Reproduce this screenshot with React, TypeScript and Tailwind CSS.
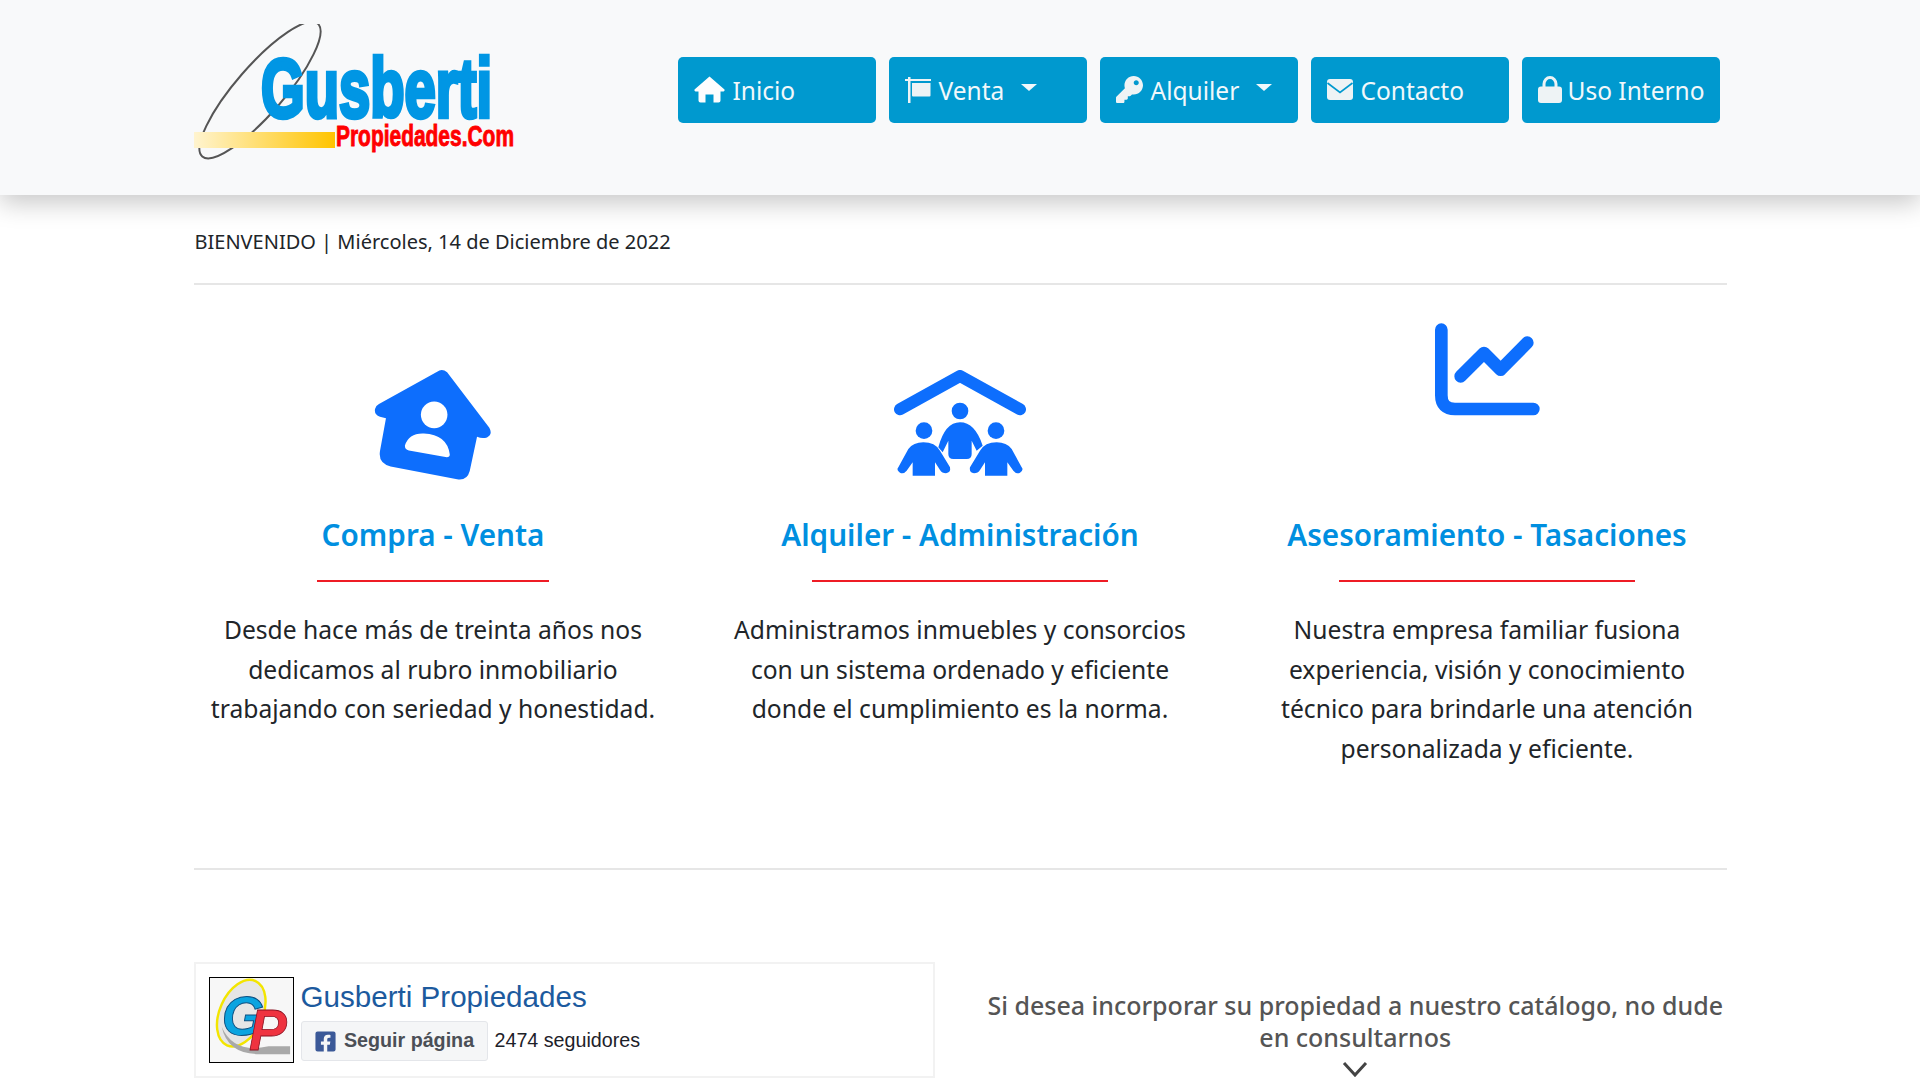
import { FaKey, FaFacebookSquare } from "react-icons/fa";
import type { ReactNode } from "react";

function Logo() {
  return (
    <svg width="330" height="150" viewBox="0 0 330 150" className="shrink-0">
      <defs>
        <linearGradient id="bar" x1="0" x2="1" y1="0" y2="0">
          <stop offset="0" stopColor="#fff4cf" />
          <stop offset="1" stopColor="#ffc400" />
        </linearGradient>
      </defs>
      <ellipse cx="66" cy="66" rx="88" ry="24" transform="rotate(-49 66 66)" fill="none" stroke="#555" strokeWidth="2" />
      <rect x="0" y="108" width="141" height="16" fill="url(#bar)" />
      <text x="67" y="93" textLength="231" lengthAdjust="spacingAndGlyphs" fontFamily="Liberation Sans, sans-serif" fontWeight="700" fontSize="84" fill="#0096e4" stroke="#0096e4" strokeWidth="4.5">Gusberti</text>
      <text x="142" y="122" textLength="178" lengthAdjust="spacingAndGlyphs" fontFamily="Liberation Sans, sans-serif" fontWeight="700" fontSize="29" fill="#ff0000" stroke="#ff0000" strokeWidth="0.9">Propiedades.Com</text>
    </svg>
  );
}

function HomeGlyph() {
  return (
    <svg width="31" height="27" viewBox="0 0 31 27" fill="#fdfdfe">
      <path d="M15.5 0.5 L30.5 13.5 Q31 15.5 28.5 15.5 H26.5 V24.5 a2 2 0 0 1-2 2 H19.5 V18.5 H11.5 V26.5 H6.5 a2 2 0 0 1-2-2 V15.5 H2.5 Q0 15.5 0.5 13.5 Z" />
    </svg>
  );
}

function SignGlyph() {
  return (
    <svg width="26" height="26" viewBox="0 0 26 26" fill="#eef3f5">
      <rect x="3" y="0" width="2.5" height="26" />
      <rect x="0" y="2" width="26" height="2" />
      <path d="M7 6h18.5v12.5a1 1 0 0 1-1 1H8a1 1 0 0 1-1-1z" />
    </svg>
  );
}

function MailGlyph() {
  return (
    <svg width="26" height="21" viewBox="0 0 26 21">
      <rect width="26" height="21" rx="3" fill="#eef3f5" />
      <path d="M0.5 4 L13 13.5 L25.5 4" fill="none" stroke="#0099cf" strokeWidth="1.6" />
    </svg>
  );
}

function LockGlyph() {
  return (
    <svg width="24" height="27" viewBox="0 0 24 27" className="-mr-[2px]">
      <path d="M6 13 V8 a6 6.5 0 0 1 12 0 V13" fill="none" stroke="#eef3f5" strokeWidth="3" />
      <rect y="10.5" width="24" height="16.5" rx="3" fill="#eef3f5" />
    </svg>
  );
}

function NavButton({ icon, label, caret }: { icon: ReactNode; label: string; caret?: boolean }) {
  return (
    <a className="flex h-[66px] w-[198px] items-center gap-[8px] rounded-[5px] bg-[#0099cf] pl-[16px] text-[24.5px] text-[#f1f8fb]">
      {icon}
      <span className="pt-[3px]">{label}</span>
      {caret && <span className="mb-[4px] ml-[9px] border-x-[8px] border-t-[7px] border-x-transparent border-t-[#f1f8fb]" />}
    </a>
  );
}

function HouseIcon() {
  return (
    <svg width="118" height="113" viewBox="100 85 355 340">
      <path fill="#0d6efd" d="M290 96 Q305 85 320 98 L447 265 Q458 285 440 294 Q425 298 410 292 L388 395 Q380 425 350 420 L150 381 Q112 372 118 335 L136 236 L118 232 Q100 225 103 208 Q105 198 115 193 Z" />
      <circle cx="281" cy="226" r="40" fill="#fff" />
      <path fill="#fff" d="M193 318 Q205 280 250 282 Q320 285 328 345 Q328 355 315 353 L205 333 Q192 330 193 318Z" />
    </svg>
  );
}

function FamilyIcon() {
  const side = "M85 350 L115 295 Q130 275 160 275 Q195 275 210 300 L240 350 Q243 366 228 368 Q216 368 210 358 L195 335 L195 375 L128 375 L128 335 L110 360 Q100 372 90 366 Q78 358 85 350Z";
  return (
    <svg width="132" height="106" viewBox="72 58 396 318" className="mb-[5px]">
      <path d="M90 176 L270 76 L450 176" fill="none" stroke="#0d6efd" strokeWidth="36" strokeLinecap="round" strokeLinejoin="round" />
      <g fill="#0d6efd">
        <circle cx="270" cy="181" r="25" />
        <circle cx="162" cy="240" r="25" />
        <circle cx="378" cy="240" r="25" />
        <path d="M205 290 Q225 215 270 215 Q315 215 338 285 L320 300 L305 270 L305 310 Q305 325 290 325 L250 325 Q235 325 235 310 L235 270 L218 305 Z" />
        <path d={side} />
        <path d={side} transform="matrix(-1 0 0 1 540 0)" />
      </g>
    </svg>
  );
}

function ChartIcon() {
  return (
    <svg width="105" height="93" viewBox="75 38 315 279" fill="none" stroke="#0d6efd" strokeWidth="38" strokeLinecap="round" strokeLinejoin="round">
      <path d="M94 58 V255 Q94 296 135 296 H370" />
      <path d="M152 198 L222 128 L272 178 L352 97" />
    </svg>
  );
}

function GpLogo() {
  return (
    <svg width="85" height="86" viewBox="0 0 85 86" className="shrink-0 border border-black">
      <rect width="85" height="86" fill="#f7f7f7" />
      <ellipse cx="32" cy="36" rx="22" ry="36" transform="rotate(24 32 36)" fill="#e6e6e6" stroke="#f3e500" strokeWidth="2.5" />
      <path d="M12 50 Q24 78 60 70 L82 70 L82 78 L50 78 Q18 78 12 50Z" fill="#a9a9a9" />
      <text x="12" y="58" fontFamily="Liberation Sans, sans-serif" fontStyle="italic" fontWeight="700" fontSize="56" fill="#0aa4e0" stroke="#0d4f80" strokeWidth="1">G</text>
      <text x="40" y="74" fontFamily="Liberation Sans, sans-serif" fontStyle="italic" fontWeight="700" fontSize="58" fill="#ef3340" stroke="#8a1020" strokeWidth="0.8">P</text>
    </svg>
  );
}

function Service({ icon, iconAlign, title, lineWidth, children }: { icon: ReactNode; iconAlign: string; title: string; lineWidth: string; children: ReactNode }) {
  return (
    <div className="flex flex-col items-center text-center">
      <div className={`flex h-[158px] w-full justify-center ${iconAlign}`}>{icon}</div>
      <h3 className="mt-[34px] text-[29.7px] font-semibold leading-[40px] text-[#008fe0]">{title}</h3>
      <div className={`mt-[25px] h-[2px] bg-[#ee1c25] ${lineWidth}`} />
      <p className="mt-[28px] text-[24.65px] leading-[39.6px] text-[#212529]">{children}</p>
    </div>
  );
}

export default function App() {
  return (
    <div className="h-screen overflow-hidden bg-white font-['Noto_Sans',sans-serif]">
      <header className="relative z-10 h-[195px] bg-[#f8f9fa] shadow-[0_8px_24px_rgba(0,0,0,0.22)]">
        <div className="mx-auto flex h-full w-[1533px] items-center">
          <div className="mt-[2px] w-[484px]">
            <Logo />
          </div>
          <nav className="mt-[-16px] flex gap-[13px]">
            <NavButton icon={<HomeGlyph />} label="Inicio" />
            <NavButton icon={<SignGlyph />} label="Venta" caret />
            <NavButton icon={<FaKey size={27} color="#eef3f5" />} label="Alquiler" caret />
            <NavButton icon={<MailGlyph />} label="Contacto" />
            <NavButton icon={<LockGlyph />} label="Uso Interno" />
          </nav>
        </div>
      </header>

      <main className="mx-auto w-[1533px]">
        <p className="pl-[1px] pt-[32px] text-[20px] leading-[30px] text-[#212529]">BIENVENIDO | Miércoles, 14 de Diciembre de 2022</p>
        <hr className="mt-[26px] border-t-2 border-[#e6e6e6]" />

        <section className="-mx-[24px] mt-[38px] grid h-[545px] grid-cols-3">
          <Service icon={<HouseIcon />} iconAlign="items-end" title="Compra - Venta" lineWidth="w-[232px]">
            Desde hace más de treinta años nos<br />dedicamos al rubro inmobiliario<br />trabajando con seriedad y honestidad.
          </Service>
          <Service icon={<FamilyIcon />} iconAlign="items-end" title="Alquiler - Administración" lineWidth="w-[296px]">
            Administramos inmuebles y consorcios<br />con un sistema ordenado y eficiente<br />donde el cumplimiento es la norma.
          </Service>
          <Service icon={<ChartIcon />} iconAlign="items-start" title="Asesoramiento - Tasaciones" lineWidth="w-[296px]">
            Nuestra empresa familiar fusiona<br />experiencia, visión y conocimiento<br />técnico para brindarle una atención<br />personalizada y eficiente.
          </Service>
        </section>
        <hr className="border-t-2 border-[#e6e6e6]" />

        <section className="-mx-[24px] mt-[92px] grid grid-cols-2">
          <div className="px-[24px]">
            <div className="flex h-[116px] w-[741px] items-center gap-[7px] border-2 border-[#f2f2f2] pl-[13px] font-['Liberation_Sans',sans-serif]">
              <GpLogo />
              <div>
                <div className="text-[29.6px] leading-[36px] text-[#1c5a9e]">Gusberti Propiedades</div>
                <div className="mt-[6px] flex items-center gap-[7px]">
                  <span className="flex h-[40px] w-[187px] items-center justify-center gap-[7px] rounded-[3px] border border-[#e4e6ea] bg-[#f5f6f7] text-[19.7px] font-bold text-[#4b4f56]">
                    <FaFacebookSquare size={23} color="#3b5998" />
                    Seguir página
                  </span>
                  <span className="text-[19.7px] text-[#1d2129]">2474 seguidores</span>
                </div>
              </div>
            </div>
          </div>
          <div className="flex flex-col items-center pt-[27px] text-center text-[25px] font-medium leading-[32px] text-[#555]">
            <div>Si desea incorporar su propiedad a nuestro catálogo, no dude<br />en consultarnos</div>
            <svg width="26" height="16" viewBox="0 0 26 16" fill="none" stroke="#444" strokeWidth="3" className="mt-[8px]">
              <path d="M2 2 L13 14 L24 2" />
            </svg>
          </div>
        </section>
      </main>
    </div>
  );
}
